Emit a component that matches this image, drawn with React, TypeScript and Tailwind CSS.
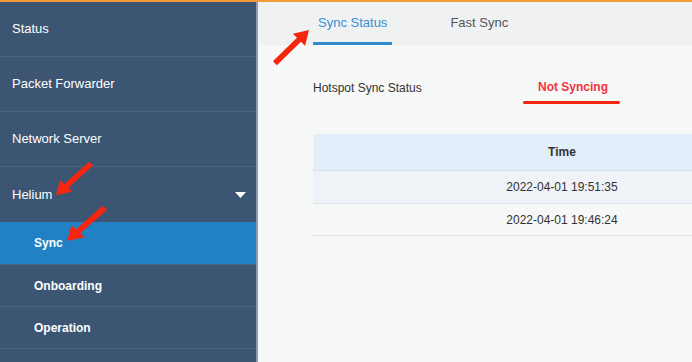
const topItems = ["Status", "Packet Forwarder", "Network Server"];
const subItems = [
  { label: "Sync", active: true, h: "h-[43px]" },
  { label: "Onboarding", active: false, h: "h-[42px]" },
  { label: "Operation", active: false, h: "h-[42px]" },
];
const rows = ["2022-04-01 19:51:35", "2022-04-01 19:46:24"];

function Arrow({ className }: { className: string }) {
  // red annotation arrow, pointing down-left by default
  return (
    <svg className={`absolute pointer-events-none ${className}`} viewBox="0 0 40 40" preserveAspectRatio="none" fill="#f5260f">
      <path d="M34.9 0.9 L9.5 26.3 L5.2 22 L1 39 L18 34.8 L13.7 30.5 L39.1 5.1 Z" />
    </svg>
  );
}

export default function App() {
  return (
    <div className="relative w-[692px] h-[362px] overflow-hidden flex font-['Liberation_Sans',Arial,sans-serif] border-t-2 border-[#f29a38]">
      <aside className="w-[258px] shrink-0 bg-[#3b5573] text-white border-r-2 border-[#8b9bb1]">
        {topItems.map((t) => (
          <div key={t} className="h-[55px] flex items-center pl-3 text-[13px] border-b border-[#4a6380]">
            {t}
          </div>
        ))}
        <div className="h-[55px] flex items-center justify-between pl-3 pr-[10px] text-[13px]">
          <span>Helium</span>
          <svg width="11" height="6" viewBox="0 0 11 6">
            <path d="M0 0 H11 L5.5 6 Z" fill="white" />
          </svg>
        </div>
        {subItems.map((s) => (
          <div
            key={s.label}
            className={`${s.h} flex items-center pl-[34px] text-[12px] font-bold border-b border-[#4a6380] ${
              s.active ? "bg-[#2281c4]" : ""
            }`}
          >
            {s.label}
          </div>
        ))}
      </aside>

      <main className="flex-1 bg-[#f7f8f8] flex flex-col">
        <div className="h-[43px] bg-[#eff1f3] flex pl-[55px] gap-[54px] text-[13px]">
          <div className="h-full flex items-center px-[5px] text-[#3b8fd2] border-b-[3px] border-[#2f8ad0] pt-[2px]">
            Sync Status
          </div>
          <div className="h-full flex items-center px-[4px] text-[#555] pb-[1px]">Fast Sync</div>
        </div>

        <div className="pl-[55px] pt-[29px] flex items-start text-[12px]">
          <div className="w-[210px] text-[#333] pt-[5px]">Hotspot Sync Status</div>
          <div className="w-[97px] flex flex-col items-center">
            <span className="text-[#f2353d] font-bold text-[12px] leading-[26px] pl-[3px]">Not Syncing</span>
            <div className="mt-[1px] w-full h-[3px] bg-[#f5260f] rounded-full" />
          </div>
        </div>

        <div className="ml-[55px] mt-[30px] w-[498px] shrink-0 text-[12px] text-[#333]">
          <div className="h-[37px] bg-[#e2eef9] rounded-t-[3px] flex items-center justify-center font-bold border-b border-[#d9dee3]">
            Time
          </div>
          {rows.map((r, i) => (
            <div
              key={r}
              className={`${i === 0 ? "h-[33px] bg-[#eff2f6]" : "h-[32px] bg-[#f7f8f8]"} flex items-center justify-center border-b border-[#e1e3e5]`}
            >
              {r}
            </div>
          ))}
        </div>
      </main>

      <Arrow className="left-[272px] top-[27px] w-[38px] h-[37px] rotate-180" />
      <Arrow className="left-[55px] top-[159px] w-[39px] h-[35px]" />
      <Arrow className="left-[66px] top-[203px] w-[42px] h-[37px]" />
    </div>
  );
}
